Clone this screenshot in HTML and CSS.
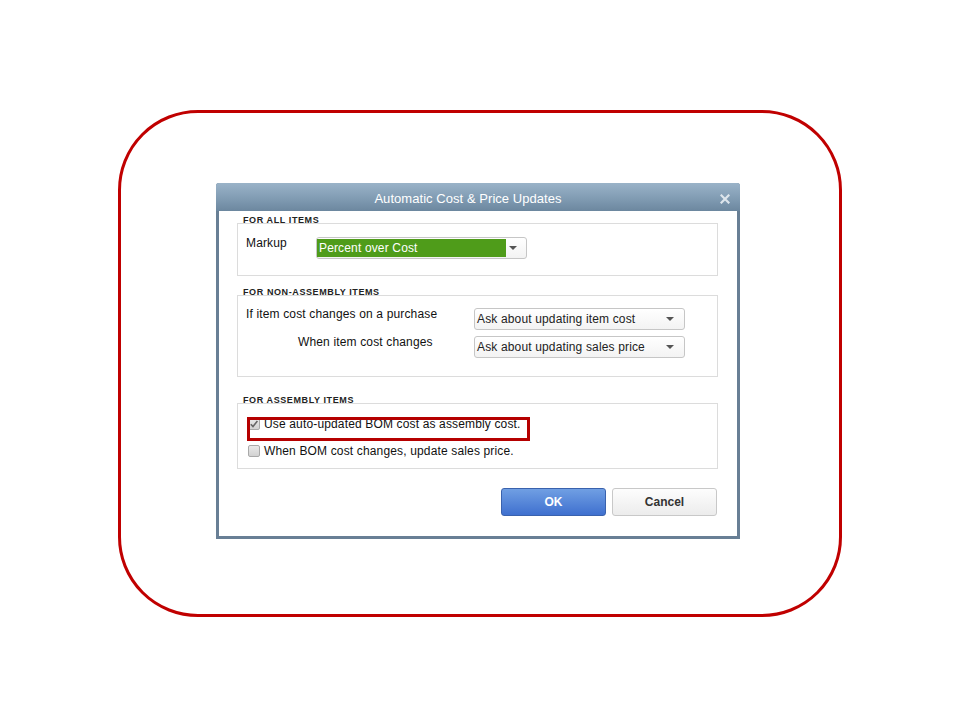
FILE: index.html
```html
<!DOCTYPE html>
<html lang="en">
<head>
<meta charset="utf-8">
<title>Automatic Cost &amp; Price Updates</title>
<link rel="stylesheet" href="styles.css">
</head>
<body>
<div class="frame">
  <div class="dialog">
    <div class="titlebar">
      <span class="title">Automatic Cost &amp; Price Updates</span>
      <svg class="close" width="10" height="10" viewBox="0 0 10 10" aria-hidden="true">
        <path d="M1.5 1.5 L8.5 8.5 M8.5 1.5 L1.5 8.5" stroke="#dde5ec" stroke-width="2.2" stroke-linecap="square"/>
      </svg>
    </div>
    <div class="dialog-body">
      <section class="group g1">
        <h3 class="group-title"><span>FOR ALL ITEMS</span></h3>
        <div class="group-body">
          <div class="row">
            <div class="label label-markup">Markup</div>
            <div class="select select-markup">
              <span class="select-value selected">Percent over Cost</span>
              <span class="arrow"></span>
            </div>
          </div>
        </div>
      </section>

      <section class="group g2">
        <h3 class="group-title"><span>FOR NON-ASSEMBLY ITEMS</span></h3>
        <div class="group-body body2">
          <div class="row">
            <div class="label label-wide">If item cost changes on a purchase</div>
            <div class="select select-wide">
              <span class="select-value">Ask about updating item cost</span>
              <span class="arrow"></span>
            </div>
          </div>
          <div class="row">
            <div class="label label-wide label-indent">When item cost changes</div>
            <div class="select select-wide">
              <span class="select-value">Ask about updating sales price</span>
              <span class="arrow"></span>
            </div>
          </div>
        </div>
      </section>

      <section class="group g3">
        <h3 class="group-title"><span>FOR ASSEMBLY ITEMS</span></h3>
        <div class="group-body body3">
          <div class="check-row">
            <span class="checkbox checked">
              <svg width="10" height="10" viewBox="0 0 10 10" aria-hidden="true"><path d="M1.8 5.2 L4 7.6 L8.4 2" fill="none" stroke="#666" stroke-width="1.6"/></svg>
            </span>
            <span class="check-text">Use auto-updated BOM cost as assembly cost.</span>
          </div>
          <div class="check-row">
            <span class="checkbox"></span>
            <span class="check-text">When BOM cost changes, update sales price.</span>
          </div>
          <div class="highlight"></div>
        </div>
      </section>

      <div class="buttons">
        <button class="btn btn-ok">OK</button>
        <button class="btn btn-cancel">Cancel</button>
      </div>
    </div>
  </div>
</div>
</body>
</html>
```

FILE: styles.css
```css
html, body {
  margin: 0;
  padding: 0;
  background: #ffffff;
}

body {
  font-family: "Liberation Sans", Arial, sans-serif;
  font-size: 12px;
  color: #111;
}

.frame {
  box-sizing: border-box;
  width: 724px;
  height: 507px;
  margin: 110px 0 0 118px;
  border: 3px solid #c00000;
  border-radius: 80px;
  padding: 70px 0 0 95px;
}

.dialog {
  box-sizing: border-box;
  width: 524px;
  border: 3px solid #687f95;
  border-top: none;
  border-radius: 3px 3px 0 0;
  background: #fff;
}

.titlebar {
  box-sizing: border-box;
  height: 28px;
  margin: 0 -3px;
  border-radius: 3px 3px 0 0;
  background: linear-gradient(to bottom, #9ab3c8 0%, #839eb5 50%, #6c879f 100%);
  display: flex;
  align-items: center;
  justify-content: center;
  padding: 3px 20px 0 0;
  position: relative;
}

.title {
  color: #ffffff;
  font-size: 13px;
  line-height: 25px;
  letter-spacing: 0.05px;
}

.close {
  position: absolute;
  right: 10px;
  top: 11px;
}

.dialog-body {
  padding: 4px 0 20px 0;
}

.group {
  margin: 0 19px 0 18px;
}

.g2 { margin-top: 11px; }
.g3 { margin-top: 18px; }

.group-title {
  margin: 0 0 -3px 0;
  height: 11px;
  line-height: 11px;
  font-size: 9px;
  letter-spacing: 0.6px;
  font-weight: bold;
  color: #222;
  padding-left: 3px;
}

.group-title span {
  background: #fff;
  padding: 0 3px 0 3px;
}

.group-body {
  border: 1px solid #dcdcdc;
  padding: 13px 8px 16px 8px;
  position: relative;
}

.body2 {
  padding: 12px 8px 18px 8px;
  display: flex;
  flex-direction: column;
  gap: 6px;
}

.body3 {
  padding: 13px 8px 10px 8px;
  display: flex;
  flex-direction: column;
  gap: 13px;
}

.row {
  display: flex;
  align-items: flex-start;
}

.label {
  line-height: 12px;
  font-size: 12px;
  color: #111;
  letter-spacing: 0.15px;
}

.label-markup { width: 70px; }
.label-wide { width: 228px; }
.label-indent { box-sizing: border-box; padding-left: 52px; }

.select {
  box-sizing: border-box;
  height: 22px;
  border: 1px solid #c6c6c6;
  border-radius: 3px;
  background: linear-gradient(to bottom, #ffffff, #f3f3f3);
  display: flex;
  align-items: center;
  position: relative;
}

.select-markup {
  width: 211px;
  padding: 1px 1px 1px 0;
}

.select-wide {
  width: 211px;
  padding-left: 2px;
}

.select-value {
  font-size: 12px;
  color: #222;
  line-height: 18px;
  letter-spacing: 0.15px;
}

.select-value.selected {
  background: #4f9c1a;
  color: #ffffff;
  width: 189px;
  height: 18px;
  padding-left: 2px;
  box-sizing: border-box;
}

.arrow {
  position: absolute;
  right: 10px;
  top: 8px;
  width: 0;
  height: 0;
  border-left: 4px solid transparent;
  border-right: 4px solid transparent;
  border-top: 4px solid #555;
}

.select-markup .arrow { right: 9px; }

.check-row {
  display: flex;
  align-items: flex-start;
  gap: 4px;
}

.checkbox {
  box-sizing: border-box;
  width: 12px;
  height: 12px;
  margin: 1px 0 0 2px;
  border: 1px solid #a9a9a9;
  border-radius: 2px;
  background: linear-gradient(to bottom, #e9e9e9, #d2d2d2);
  display: flex;
  align-items: center;
  justify-content: center;
  flex: none;
}

.checkbox svg { display: block; }

.check-text {
  font-size: 12px;
  line-height: 14px;
  color: #111;
  letter-spacing: 0.15px;
}

.highlight {
  position: absolute;
  left: 9px;
  top: 13px;
  width: 283px;
  height: 24px;
  box-sizing: border-box;
  border: 3px solid #b50000;
}

.buttons {
  display: flex;
  justify-content: flex-end;
  gap: 6px;
  margin: 19px 20px 0 0;
}

.btn {
  box-sizing: border-box;
  width: 105px;
  height: 28px;
  border-radius: 3px;
  font-family: "Liberation Sans", Arial, sans-serif;
  font-size: 12px;
  font-weight: bold;
  padding: 0;
}

.btn-ok {
  color: #ffffff;
  border: 1px solid #3a62ad;
  background: linear-gradient(to bottom, #709fe3, #3f70cf);
}

.btn-cancel {
  color: #333333;
  border: 1px solid #c8c8c8;
  background: linear-gradient(to bottom, #fdfdfd, #ececec);
}
```
